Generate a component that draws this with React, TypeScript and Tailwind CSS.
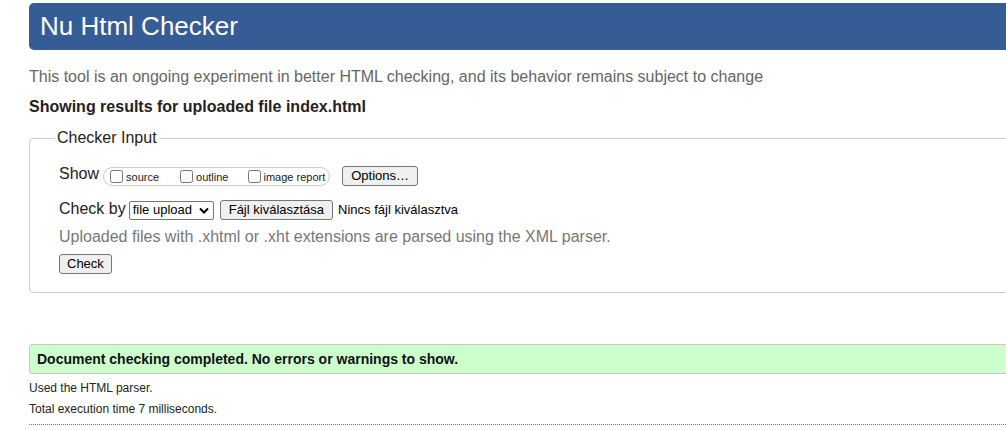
export default function App() {
  return (
    <div className="h-[430px] overflow-hidden bg-white font-['Liberation_Sans',Arial,sans-serif] text-[#222]">
      <div className="ml-[29px] -mr-[60px] pt-[3px]">
        <h1 className="h-[47px] rounded-[5px] bg-[#365c96] pl-[11px] pt-[8px] text-[26px] leading-[30px] font-normal text-white">
          Nu Html Checker
        </h1>
        <p className="mt-[18px] text-[16px] leading-[18px] text-[#666]">
          This tool is an ongoing experiment in better HTML checking, and its behavior remains subject to change
        </p>
        <h2 className="mt-[12px] text-[16px] leading-[18px] font-bold text-[#222]">
          Showing results for uploaded file index.html
        </h2>

        <fieldset className="mt-[13px] rounded-[4px] border border-[#ccc] pl-[29px] pb-[17px]">
          <legend className="-ml-[4px] px-[2px] text-[16px] leading-[18px]">Checker Input</legend>

          <div className="mt-[19px] flex h-[20px] items-center">
            <span className="mb-[5px] text-[16px] leading-[18px]">Show</span>
            <div className="ml-[4px] flex h-[19px] items-center rounded-full border border-[#ccc] pl-[6px] pr-[4px] text-[11px]">
              <label className="flex items-center">
                <input type="checkbox" className="m-0 h-[13px] w-[13px]" />
                <span className="ml-[3px] mt-[3px]">source</span>
              </label>
              <label className="ml-[21px] flex items-center">
                <input type="checkbox" className="m-0 h-[13px] w-[13px]" />
                <span className="ml-[3px] mt-[3px]">outline</span>
              </label>
              <label className="ml-[20px] flex items-center">
                <input type="checkbox" className="m-0 h-[13px] w-[13px]" />
                <span className="ml-[2px] mt-[3px]">image report</span>
              </label>
            </div>
            <button className="ml-[12px] h-[20px] rounded-[3px] border border-[#767676] bg-[#efefef] px-[8px] text-[13px] leading-[16px] text-black">
              Options…
            </button>
          </div>

          <div className="mt-[14px] flex h-[20px] items-center">
            <span className="mb-[3px] text-[16px] leading-[18px]">Check by</span>
            <div className="ml-[3px] flex h-[19px] w-[85px] items-center justify-between rounded-[2px] border border-[#767676] bg-white pl-[3px] pr-[4px] text-[13px] text-black">
              <span>file upload</span>
              <svg width="10" height="7" viewBox="0 0 10 7">
                <path d="M1 1.5 L5 5.5 L9 1.5" fill="none" stroke="#000" strokeWidth="2" />
              </svg>
            </div>
            <button className="ml-[6px] h-[20px] rounded-[3px] border border-[#767676] bg-[#efefef] px-[8px] text-[13px] leading-[16px] text-black">
              Fájl kiválasztása
            </button>
            <span className="ml-[5px] text-[13px] text-black">Nincs fájl kiválasztva</span>
          </div>

          <p className="mt-[8px] text-[16px] leading-[18px] text-[#777]">
            Uploaded files with .xhtml or .xht extensions are parsed using the XML parser.
          </p>

          <button className="mt-[8px] h-[20px] rounded-[3px] border border-[#767676] bg-[#efefef] px-[7px] text-[13px] leading-[16px] text-black">
            Check
          </button>
        </fieldset>

        <div className="mt-[51px] flex h-[30px] items-center rounded-l-[3px] border border-[#c8c8c8] bg-[#ccffcc] pl-[7px] text-[14px] font-bold text-[#111]">
          Document checking completed. No errors or warnings to show.
        </div>
        <p className="mt-[7px] text-[12px] leading-[14px]">Used the HTML parser.</p>
        <p className="mt-[7px] text-[12px] leading-[14px]">Total execution time 7 milliseconds.</p>
        <div className="mt-[8px] border-t border-dotted border-[#777]" />
      </div>
    </div>
  );
}
